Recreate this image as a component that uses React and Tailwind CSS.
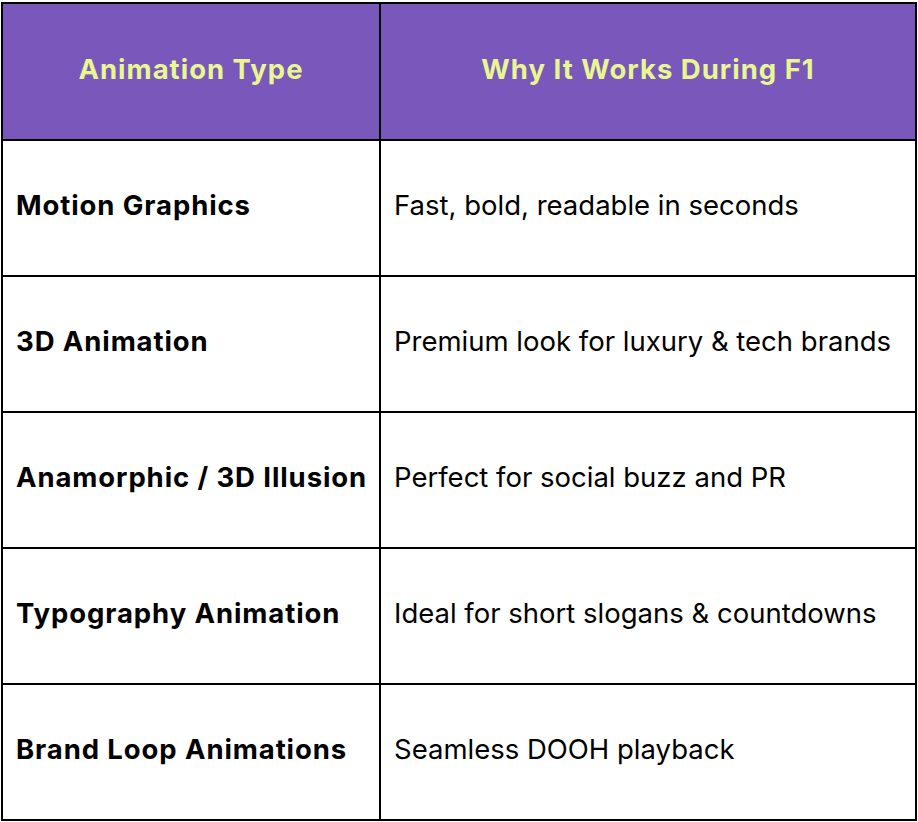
import React from "react";

const rows = [
  ["Motion Graphics", "Fast, bold, readable in seconds"],
  ["3D Animation", "Premium look for luxury & tech brands"],
  ["Anamorphic / 3D Illusion", "Perfect for social buzz and PR"],
  ["Typography Animation", "Ideal for short slogans & countdowns"],
  ["Brand Loop Animations", "Seamless DOOH playback"],
];

const App = () => {
  return (
    <div className="bg-white w-[918px] h-[822px] pt-[2px] pl-[1px]" style={{ fontFamily: "Inter, 'Noto Sans', sans-serif" }}>
      <table className="w-[916px] border-collapse border-2 border-black table-fixed">
        <colgroup>
          <col className="w-[378px]" />
          <col />
        </colgroup>
        <thead>
          <tr className="bg-[#7957bb] h-[137px]">
            <th className="border-2 border-black text-center pb-[3px] text-[27.5px] font-bold text-[#e8f88e] tracking-[1px]">
              Animation Type
            </th>
            <th className="border-2 border-black text-center pb-[3px] text-[27.5px] font-bold text-[#e8f88e] tracking-[1px]">
              Why It Works During F1
            </th>
          </tr>
        </thead>
        <tbody>
          {rows.map(([type, why]) => (
            <tr key={type} className="h-[136px]">
              <td className="border-2 border-black pl-[13px] pb-[5px] text-[27.5px] font-bold text-black tracking-[0.9px] whitespace-nowrap">
                {type}
              </td>
              <td className="border-2 border-black pl-[13px] pb-[5px] text-[27.5px] text-black whitespace-nowrap">
                {why}
              </td>
            </tr>
          ))}
        </tbody>
      </table>
    </div>
  );
};

export default App;
